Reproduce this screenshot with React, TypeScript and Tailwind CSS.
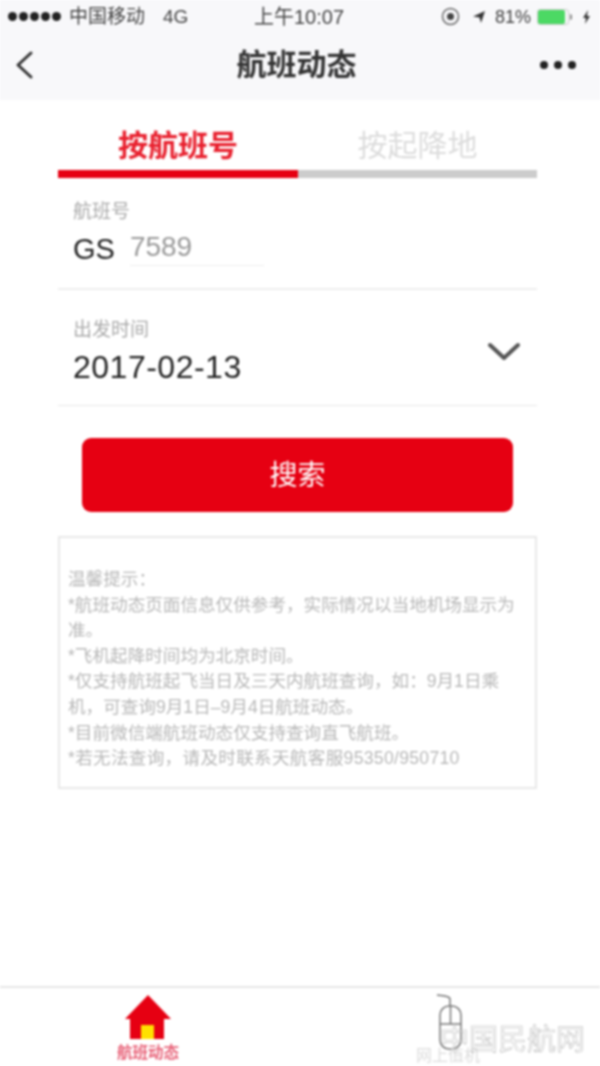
const FONT = "font-['Liberation_Sans','Noto_Sans_CJK_SC',sans-serif]";

const tips = [
  '温馨提示：',
  '*航班动态页面信息仅供参考，实际情况以当地机场显示为',
  '准。',
  '*飞机起降时间均为北京时间。',
  '*仅支持航班起飞当日及三天内航班查询，如：9月1日乘',
  '机，可查询9月1日–9月4日航班动态。',
  '*目前微信端航班动态仅支持查询直飞航班。',
  '*若无法查询，请及时联系天航客服95350/950710',
];

function StatusBar() {
  return (
    <div className="flex h-[30px] items-center pl-2 pr-[10px] pt-[3px] text-[19px] leading-none text-[#444]">
      <div className="flex flex-1 items-center">
        <div className="flex gap-[2px]">
          {[0, 1, 2, 3, 4].map(i => (
            <span key={i} className="h-[9px] w-[9px] rounded-full bg-[#222]"></span>
          ))}
        </div>
        <span className="ml-[8px]">中国移动</span>
        <span className="ml-[18px]">4G</span>
      </div>
      <span className="text-[20px]">上午10:07</span>
      <div className="flex flex-1 items-center justify-end text-[18px]">
        <svg width="19" height="19" viewBox="0 0 19 19" className="mr-[12px]">
          <circle cx="9.5" cy="9.5" r="8" fill="none" stroke="#666" strokeWidth="1.5" />
          <circle cx="9.5" cy="9.5" r="3.5" fill="#444" />
        </svg>
        <svg width="14" height="14" viewBox="0 0 14 14" className="mr-[9px]">
          <path d="M1 6.5 13 1 9 13 7.5 7.5Z" fill="#333" />
        </svg>
        <span>81%</span>
        <div className="ml-[6px] flex h-[16px] w-[32px] items-center rounded-[3px] border border-[#ccc]">
          <div className="h-full w-[90%] rounded-[2px] bg-[#4cd964]"></div>
        </div>
        <span className="ml-[1px] h-[6px] w-[2px] rounded-r bg-[#888]"></span>
        <svg width="7" height="14" viewBox="1 0 7 14" className="ml-[11px]">
          <path d="M6 0 1 8h3l-1 6 5-8H5Z" fill="#333" />
        </svg>
      </div>
    </div>
  );
}

function NavBar() {
  return (
    <div className="flex h-[70px] items-center">
      <div className="w-[100px] pl-[15px]">
        <svg width="20" height="30" viewBox="0 0 20 30" fill="none" stroke="#333" strokeWidth="3" strokeLinecap="round" strokeLinejoin="round">
          <path d="M16 3 3 15l13 12" />
        </svg>
      </div>
      <span className="flex-1 text-center text-[30px] font-bold leading-none text-[#333]">航班动态</span>
      <div className="flex w-[107px] justify-end gap-[6px] pr-[24px]">
        <span className="h-[8px] w-[8px] rounded-full bg-[#222]"></span>
        <span className="h-[8px] w-[8px] rounded-full bg-[#222]"></span>
        <span className="h-[8px] w-[8px] rounded-full bg-[#222]"></span>
      </div>
    </div>
  );
}

function Tabs() {
  return (
    <div className="flex">
      <div className="flex h-[78px] w-[240px] flex-col justify-end border-b-[8px] border-[#e60012]">
        <span className="pb-[4px] text-center text-[30px] font-bold leading-[40px] text-[#e8202e]">按航班号</span>
      </div>
      <div className="flex h-[78px] w-[239px] flex-col justify-end border-b-[8px] border-[#cccccc]">
        <span className="pb-[4px] text-center text-[30px] leading-[40px] text-[#dcdcdc]">按起降地</span>
      </div>
    </div>
  );
}

function FlightForm() {
  return (
    <div>
      <div className="flex h-[112px] flex-col border-b-2 border-[#eeeeee] pl-[15px] pt-[22px]">
        <span className="text-[19px] leading-[24px] text-[#aaaaaa]">航班号</span>
        <div className="mt-[5px] flex items-start">
          <span className="text-[29px] leading-[40px] text-[#222]">GS</span>
          <div className="ml-[15px] flex h-[37px] w-[134px] items-center border-b border-[#eeeeee] text-[28px] leading-none text-[#999999]">7589</div>
        </div>
      </div>
      <div className="flex h-[116px] items-center justify-between border-b border-[#e8e8e8] pl-[15px] pr-[17px]">
        <div className="flex flex-col pt-[9px]">
          <span className="text-[19px] leading-[24px] text-[#aaaaaa]">出发时间</span>
          <span className="mt-[5px] text-[32px] leading-[40px] tracking-[0.5px] text-[#222]">2017-02-13</span>
        </div>
        <svg width="32" height="20" viewBox="0 0 32 20" fill="none" stroke="#555" strokeWidth="4" strokeLinecap="round" strokeLinejoin="round" className="mt-[8px]">
          <path d="M2 3 16 16 30 3" />
        </svg>
      </div>
    </div>
  );
}

function TipBox() {
  return (
    <div className="mt-[24px] h-[253px] border-2 border-[#e8e8e8] pl-[8px] pt-[29px] text-[17.6px] leading-[25.6px] text-[#b8b8b8]">
      {tips.map(line => (
        <div key={line} className="whitespace-nowrap last:tracking-[0.3px]">{line}</div>
      ))}
    </div>
  );
}

function BottomBar() {
  return (
    <div className="relative flex h-[80px] border-t-2 border-[#e6e6e6]">
      <div className="flex w-[296px] flex-col items-center pt-[7px]">
        <svg width="46" height="44" viewBox="0 0 46 44">
          <path d="M23 0 46 24H39V44H5V24H0Z" fill="#e60012" />
          <rect x="16" y="30" width="13" height="14" fill="#ffe100" />
        </svg>
        <span className="mt-[5px] text-[15.5px] font-bold leading-[18px] text-[#e8647a]">航班动态</span>
      </div>
      <div className="flex w-[304px] flex-col items-center pt-[6px]">
        <svg width="30" height="56" viewBox="0 0 30 56" fill="none" stroke="#777" strokeWidth="1.5" className="ml-[5px]">
          <path d="M1 1c6 1 13 1 13 4v7" />
          <rect x="4" y="12" width="21" height="43" rx="9" />
          <path d="M4 30h21M14.5 12v18" />
        </svg>
        <span className="-mt-[3px] text-[16px] leading-[18px] text-[#dddddd]">网上值机</span>
      </div>
      <span className="absolute left-[440px] top-[36px] text-[29px] leading-[32px] text-white/20 [-webkit-text-stroke:0.6px_#b8b8b8]">中国民航网</span>
    </div>
  );
}

export default function App() {
  return (
    <div className={`flex h-[1066px] w-[600px] flex-col overflow-hidden bg-white blur-[0.9px] ${FONT}`}>
      <div className="bg-[#f8f8fa]">
        <StatusBar />
        <NavBar />
      </div>
      <div className="flex flex-1 flex-col pl-[58px] pr-[63px]">
        <Tabs />
        <FlightForm />
        <button className="mx-[24px] mt-[32px] flex h-[74px] items-center justify-center rounded-[9px] bg-[#e60012] pt-[2px] text-[28px] text-white">搜索</button>
        <TipBox />
      </div>
      <BottomBar />
    </div>
  );
}
